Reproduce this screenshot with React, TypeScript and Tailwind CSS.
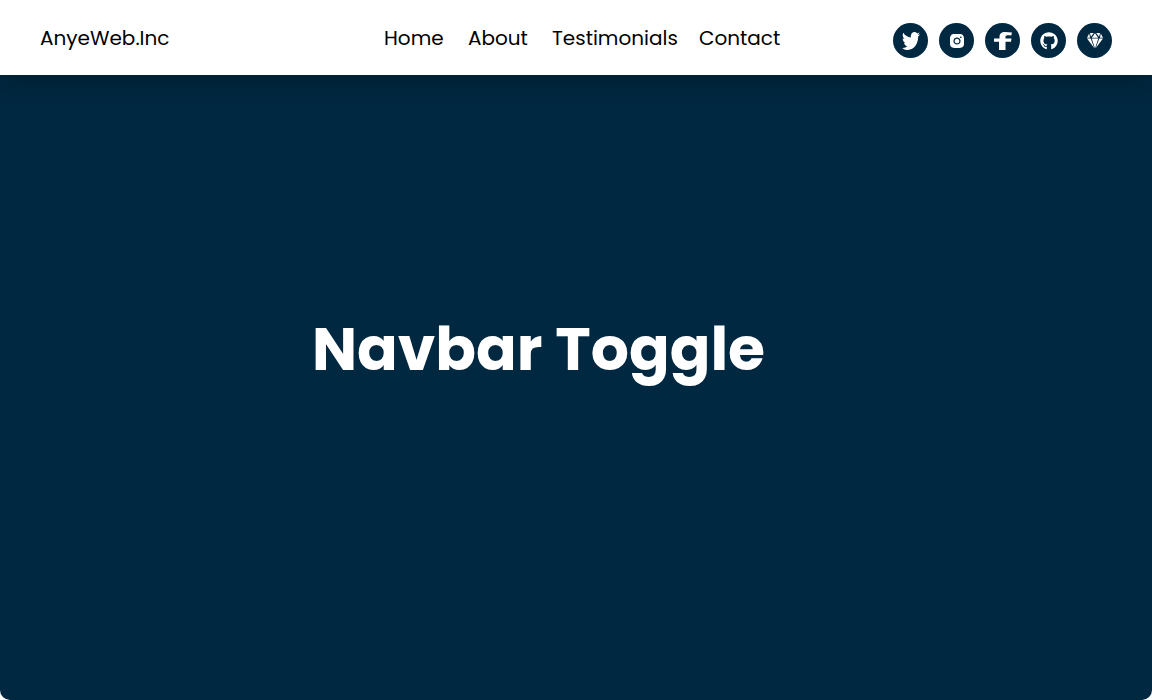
import { FaGithub } from "react-icons/fa";
import { AiFillInstagram } from "react-icons/ai";
import type { ReactNode } from "react";

const links = [
  { label: "Home", width: "w-15" },
  { label: "About", width: "w-15" },
  { label: "Testimonials", width: "w-[123px]" },
  { label: "Contact", width: "w-[82px]" },
];

function Twitter() {
  return (
    <svg viewBox="0 48 512 416" preserveAspectRatio="none" className="size-[18px]" fill="currentColor" aria-hidden="true">
      <path d="M459.37 151.716c.325 4.548.325 9.097.325 13.645 0 138.72-105.583 298.558-298.558 298.558-59.452 0-114.68-17.219-161.137-47.106 8.447.974 16.568 1.299 25.34 1.299 49.055 0 94.213-16.568 130.274-44.832-46.132-.975-84.792-31.188-98.112-72.772 6.498.974 12.995 1.624 19.818 1.624 9.421 0 18.843-1.3 27.614-3.573-48.081-9.747-84.143-51.98-84.143-102.985v-1.299c13.969 7.797 30.214 12.67 47.431 13.319-28.264-18.843-46.781-51.005-46.781-87.391 0-19.492 5.197-37.36 14.294-52.954 51.655 63.675 129.3 105.258 216.365 109.807-1.624-7.797-2.599-15.918-2.599-24.04 0-57.828 46.782-104.934 104.934-104.934 30.213 0 57.502 12.67 76.67 33.137 23.715-4.548 46.456-13.32 66.599-25.34-7.798 24.366-24.366 44.833-46.132 57.827 21.117-2.273 41.584-8.122 60.426-16.243-14.292 20.791-32.161 39.308-52.628 54.253z" />
    </svg>
  );
}

function Facebook() {
  return (
    <svg viewBox="0 0 20 18" className="h-[18px] w-5" fill="currentColor" aria-hidden="true">
      <path d="M1 6.500H6.500V5C6.500 1.500 8.500 0 12 0C14.500 0 17 .2 19 .6L18.300 3.500C17 3.200 15.500 3.200 14.500 3.200C13 3.200 12.500 4 12.500 5V6.500H18.500L18 9.800H12.500V18H6V9.800H1Z" />
    </svg>
  );
}

function Diamond() {
  return (
    <svg viewBox="0 0 18 18" className="size-[18px]" fill="currentColor" aria-hidden="true">
      <path d="M4 1H7.800L4.900 4.800ZM9 1.200L12.200 5.800H5.800ZM10.200 1H14L13.100 4.800ZM3.200 1.500L4 5.800H1ZM14.800 1.500L17 5.800H14ZM1 6.500H4.700L8.200 16ZM5.700 6.500H12.300L9 16.500ZM13.300 6.500H17L9.800 16Z" />
    </svg>
  );
}

const socials: { label: string; icon: ReactNode }[] = [
  { label: "Twitter", icon: <Twitter /> },
  { label: "Instagram", icon: <AiFillInstagram className="size-[18px]" /> },
  { label: "Facebook", icon: <Facebook /> },
  { label: "GitHub", icon: <FaGithub className="size-[18px]" /> },
  { label: "Sketch", icon: <Diamond /> },
];

export default function App() {
  return (
    <div className="min-h-screen bg-white font-['Poppins','Inter',sans-serif]">
      <div className="flex min-h-screen flex-col overflow-hidden rounded-b-[10px] bg-[#002840]">
        <header className="grid h-[75px] shrink-0 grid-cols-[1fr_auto_1fr] items-center bg-white px-10 text-xl text-black shadow-[0_10px_20px_rgba(0,0,0,0.19)]">
          <a href="#home">AnyeWeb.Inc</a>
          <nav className="ml-[13px] flex gap-6">
            {links.map(({ label, width }) => (
              <a key={label} href={`#${label.toLowerCase()}`} className={`whitespace-nowrap ${width}`}>
                {label}
              </a>
            ))}
          </nav>
          <div className="flex justify-end gap-[11px] pt-[6px]">
            {socials.map(({ label, icon }) => (
              <a
                key={label}
                href={`#${label.toLowerCase()}`}
                aria-label={label}
                className="flex size-[35px] items-center justify-center rounded-full bg-[#002840] text-white"
              >
                {icon}
              </a>
            ))}
          </div>
        </header>
        <main className="flex grow items-center justify-center pr-[75px] pb-[77px]">
          <h1 className="text-[60px] leading-none font-bold text-white">Navbar Toggle</h1>
        </main>
      </div>
    </div>
  );
}
